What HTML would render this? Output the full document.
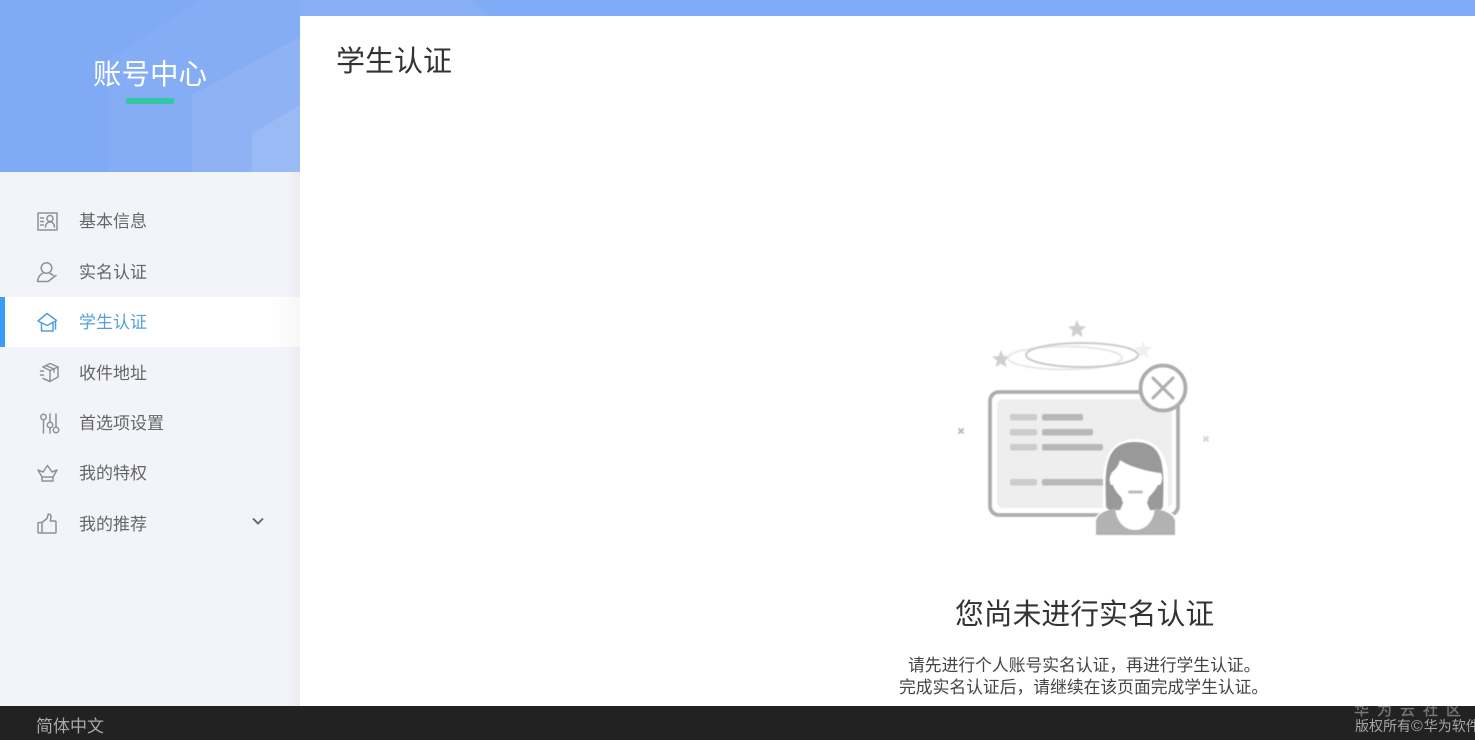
<!DOCTYPE html>
<html lang="zh-CN">
<head>
<meta charset="utf-8">
<title>学生认证</title>
<style>
html,body{margin:0;padding:0;width:1475px;height:740px;overflow:hidden;background:#fff}
body{position:relative;font-family:"Liberation Sans","Noto Sans CJK SC",sans-serif;color:#333}
.abs{position:absolute;white-space:nowrap}
.item{position:absolute;left:79px;font-size:17px;line-height:24px;color:#666;white-space:nowrap;z-index:1}
svg{position:absolute;left:0;top:0;overflow:visible}
</style>
</head>
<body>
<svg width="1475" height="740" viewBox="0 0 1475 740" style="z-index:0">
  <defs>
    <linearGradient id="side" x1="0" x2="1" y1="0" y2="0">
      <stop offset="0" stop-color="#000" stop-opacity="0"/>
      <stop offset="1" stop-color="#000" stop-opacity=".035"/>
    </linearGradient>
    <linearGradient id="act" x1="0" x2="1" y1="0" y2="0">
      <stop offset="0" stop-color="#fff"/>
      <stop offset=".9" stop-color="#fff"/>
      <stop offset="1" stop-color="#f8f8f9"/>
    </linearGradient>
  </defs>
  <!-- header -->
  <rect x="0" y="0" width="1475" height="16" fill="#80abf7"/>
  <polygon points="300,0 470,0 490,16 300,16" fill="#88aff6"/>
  <rect x="0" y="0" width="300" height="172" fill="#80aaf4"/>
  <polygon points="108,172 108,60 200,0 300,0 300,172" fill="#84adf5"/>
  <polygon points="192,172 192,95 300,37 300,172" fill="#8fb2f5"/>
  <polygon points="252,172 252,134 300,105 300,172" fill="#9abaf6"/>
  <!-- sidebar -->
  <rect x="0" y="172" width="300" height="534" fill="#f2f4fa"/>
  <rect x="286" y="172" width="14" height="534" fill="url(#side)"/>
  <rect x="0" y="297" width="300" height="50" fill="url(#act)"/>
  <rect x="0" y="297" width="5" height="50" fill="#3a9bfb"/>
  <rect x="126" y="98" width="48" height="6" rx="1" fill="#34c7a4"/>

  <!-- menu icons -->
  <g fill="none" stroke="#8f9196" stroke-width="1.500" stroke-linecap="round" stroke-linejoin="round" style="filter:blur(.25px)">
    <rect x="38" y="213" width="19" height="17"/>
    <path d="M40.500 218h3M40.500 221.500h3M40.500 225h3"/>
    <circle cx="50" cy="218.500" r="3"/>
    <path d="M45.500 227c.3-3.500 2-5 4.500-5s4.200 1.500 4.500 5"/>

    <circle cx="46.500" cy="268" r="5.300"/>
    <path d="M43 273c-3 1.500-5 4.500-5.500 8.500h10.500l8-6"/>
    <path d="M50 273.500c1.500.5 2.500 1.200 3.300 2"/>

    <g stroke="#4f9fe0">
      <path d="M38 321l9-7.500 9.500 7-9.500 5z"/>
      <path d="M41.500 323v8h11.500v-8"/>
      <path d="M55.500 322v7"/>
    </g>

    <path d="M43 367l7-3.500 8 3.500v10l-8 4.500-7-3"/>
    <path d="M43 367l7 3.500 8-3.500M50 370.500v10.500M46 365.500l8 3.500v3"/>
    <path d="M40.500 371h3M40.500 375h3"/>

    <path d="M43.500 420v13M50 414v8M50 428v5M56 414v13"/>
    <circle cx="43.500" cy="417" r="2.700"/>
    <circle cx="50" cy="425" r="2.700"/>
    <circle cx="56" cy="430" r="2.700"/>

    <path d="M42 477l-4-7 5 2 4.500-6.500 4.500 6.500 5-2-4 7z"/>
    <path d="M42 477v4h11v-4"/>

    <path d="M38 523.500q0-1 1-1h3v10.500h-3q-1 0-1-1zM42 522.500l5-4 1.300-4.500c1.700 0 2.700 1 2.700 3l-.7 4h4.700q1 0 1 1v10q0 1-1 1h-13"/>
  </g>
  <path d="M253 518.500l5 5 5-5" fill="none" stroke="#666" stroke-width="1.900"/>

  <!-- illustration -->
  <g style="filter:blur(.45px)">
    <polygon points="1077,320 1079.600,326 1086,326.600 1081.200,330.800 1082.600,337 1077,333.800 1071.400,337 1072.800,330.800 1068,326.600 1074.400,326" fill="#cfcfcf"/>
    <polygon points="1001,350 1003.400,356 1010,356.500 1005,360.700 1006.500,367 1001,363.700 995.500,367 997,360.700 992,356.500 998.600,356" fill="#cfcfcf"/>
    <polygon points="1143,341 1145.200,346.800 1152,347.400 1147,351.400 1148.500,358 1143,354.500 1137.500,358 1139,351.400 1134,347.400 1140.800,346.800" fill="#efefef"/>
    <ellipse cx="1065" cy="358" rx="57" ry="11.500" fill="none" stroke="#e8e8e8" stroke-width="2"/>
    <ellipse cx="1082" cy="355" rx="56" ry="12" fill="none" stroke="#cbcbcb" stroke-width="2"/>
    <path d="M958.500 428.500l5 5M963.500 428.500l-5 5" stroke="#bdbdbd" stroke-width="2.200" fill="none"/>
    <path d="M1203.500 436.500l5 5M1208.500 436.500l-5 5" stroke="#d6d6d6" stroke-width="2.200" fill="none"/>

    <rect x="990" y="392" width="188" height="123" rx="9" fill="#fff" stroke="#adadad" stroke-width="3.800"/>
    <rect x="997" y="399" width="175" height="109" rx="7" fill="#eeeeee"/>
    <g fill="#cccccc">
      <rect x="1010" y="414" width="27" height="6.500" rx="2"/>
      <rect x="1010" y="429" width="27" height="6.500" rx="2"/>
      <rect x="1010" y="444" width="27" height="6.500" rx="2"/>
      <rect x="1010" y="479" width="27" height="6.500" rx="2"/>
    </g>
    <g fill="#b8b8b8">
      <rect x="1042" y="414" width="41" height="6.500" rx="2"/>
      <rect x="1042" y="429" width="51" height="6.500" rx="2"/>
      <rect x="1042" y="444" width="61" height="6.500" rx="2"/>
      <rect x="1042" y="479" width="64" height="6.500" rx="2"/>
    </g>

    <circle cx="1163" cy="388" r="22.500" fill="#fff" stroke="#adadad" stroke-width="3.800"/>
    <path d="M1153 378l20 20M1173 378l-20 20" stroke="#adadad" stroke-width="3" stroke-linecap="round" fill="none"/>

    <!-- person -->
    <path d="M1094 518v17h84v-17l-10-8v-30c1-28-14-41-33-41s-32 13-32 41v30z" fill="#fff"/>
    <path d="M1106 505C1105 470 1104 442 1135 442C1166 442 1164 470 1163 505q0 5-5 5h-46q-6 0-6-5z" fill="#999"/>
    <path d="M1096 535v-14c1-5 5-8 10-10l9-3c1 13 9 22 20 22s19-9 20-22l9 3c5 2 10 5 11 10v14z" fill="#b2b2b2"/>
    <path d="M1111 473q7-5 9-13c10 7 26 11 41 13 2 3 1 10-1 12h-2c-2 4-5 8-9 12l-2 6 3 7c-2 12-9 20-15 20s-13-8-15-20l3-7-2-6c-4-4-7-8-8-12h-2c-2-3-2-9 1-12z" fill="#fff"/>
    <rect x="1128" y="490.500" width="15" height="3" rx="1.500" fill="#bcbcbc"/>
  </g>

  <!-- footer -->
  <rect x="0" y="706" width="1475" height="34" fill="#222222"/>
</svg>

<div class="abs" style="left:93px;top:55px;font-size:28.500px;line-height:40px;color:#fff;z-index:1">账号中心</div>
<div class="abs" style="left:336px;top:41px;font-size:29px;line-height:42px;color:#333;z-index:1">学生认证</div>

<div class="item" style="top:210px">基本信息</div>
<div class="item" style="top:261px">实名认证</div>
<div class="item" style="top:311px;color:#55a0dc">学生认证</div>
<div class="item" style="top:362px">收件地址</div>
<div class="item" style="top:412px">首选项设置</div>
<div class="item" style="top:462px">我的特权</div>
<div class="item" style="top:513px">我的推荐</div>

<div class="abs" style="left:955px;top:594px;font-size:28.800px;line-height:42px;color:#333;z-index:1">您尚未进行实名认证</div>
<div class="abs" style="left:908px;top:655px;font-size:16.800px;line-height:22px;color:#444;z-index:1">请先进行个人账号实名认证，再进行学生认证。</div>
<div class="abs" style="left:899px;top:677px;font-size:16.800px;line-height:22px;color:#444;z-index:1">完成实名认证后，请继续在该页面完成学生认证。</div>

<div class="abs" style="left:36px;top:715px;font-size:17px;line-height:24px;color:#a9a9a9;z-index:1">简体中文</div>
<div style="position:absolute;left:1300px;top:706px;width:175px;height:34px;overflow:hidden;z-index:1">
  <div class="abs" style="left:54px;top:-5px;font-size:15px;line-height:20px;letter-spacing:8px;color:#777;text-shadow:0 0 1px #777">华为云社区</div>
  <div class="abs" style="left:55px;top:10px;font-size:14px;line-height:20px;color:#a5a5a5">版权所有<span style="font-size:16px;letter-spacing:1px">©</span>华为软件技术有限公司</div>
</div>
</body>
</html>
